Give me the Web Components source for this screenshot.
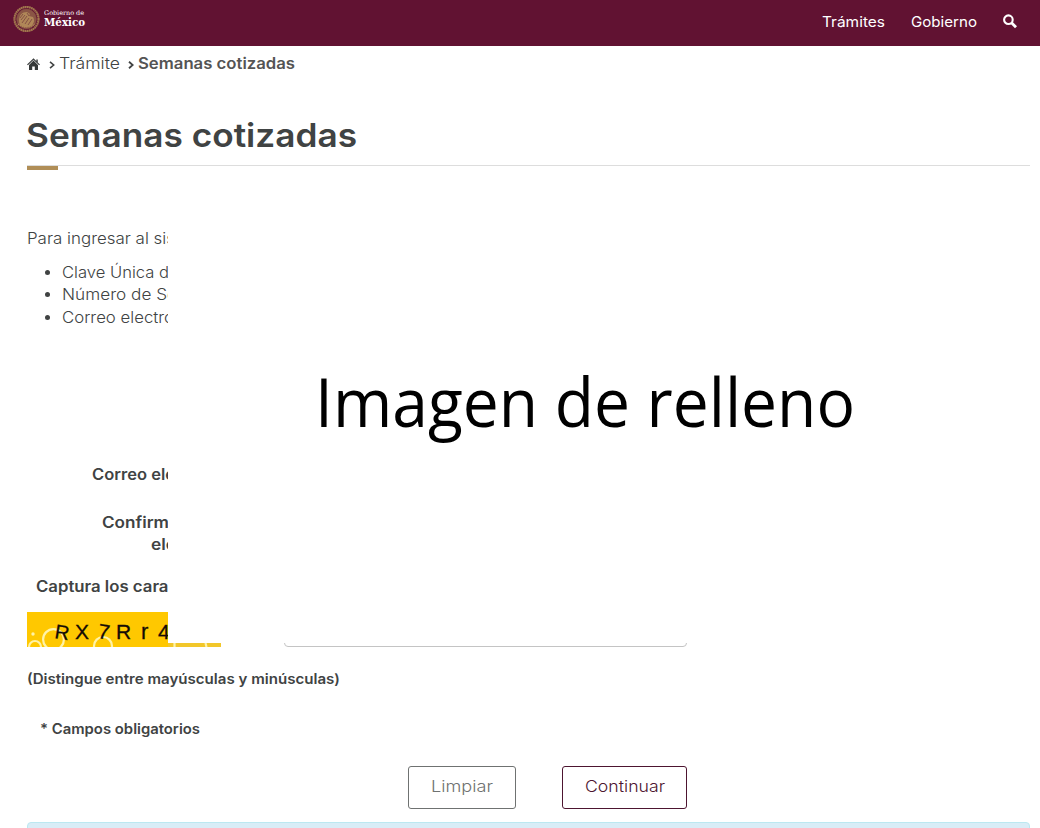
<!DOCTYPE html>
<html lang="es">
<head>
<meta charset="utf-8">
<title>Semanas cotizadas</title>
<style>
html,body{margin:0;padding:0;background:#fff}
body{font-family:Inter,"Open Sans",sans-serif;color:#404343;width:1040px;height:828px;overflow:hidden}
</style>
</head>
<body>
<semanas-page></semanas-page>
<script>
/* A line of text whose glyphs are stretched to fill a set width. */
class FitText extends HTMLElement{
  connectedCallback(){
    const w=+this.getAttribute('w'), s=this.getAttribute('size')||15.5, lh=this.getAttribute('lh')||22;
    const r=this.attachShadow({mode:'open'});
    r.innerHTML=`<style>:host{display:block;flex:none;width:${w}px;height:${lh}px;font-size:${s}px;line-height:${lh}px;font-weight:${this.getAttribute('weight')||400}}
    span{display:inline-block;white-space:pre;transform-origin:0 50%;vertical-align:top}</style><span><slot></slot></span>`;
    const sp=r.querySelector('span');
    const n=sp.getBoundingClientRect().width;
    if(n) sp.style.transform=`scaleX(${w/n})`;
  }
}
class GobHeader extends HTMLElement{
  constructor(){super();this.attachShadow({mode:'open'}).innerHTML=`
<style>
:host{display:flex;height:46px;box-sizing:border-box;background:#611232;color:#fff;padding:0 22px 0 13px;align-items:flex-start}
.seal{margin-top:5px;width:27px;height:28px}
.brand{margin:9px 0 0 4px;font-family:"DejaVu Serif",serif}
nav{display:flex;margin:11px 0 0 auto}
.g{margin-left:26px}
.s{margin:3px 0 0 25px;width:15px;height:15px}
</style>
<svg class="seal" viewBox="0 0 27 28" fill="none">
<circle cx="13.5" cy="14" r="12" stroke="#a37a50" stroke-width="2.200" stroke-dasharray="1.6 .5"/>
<circle cx="13.5" cy="14" r="12.4" stroke="#a07449" stroke-width=".6"/>
<circle cx="13.5" cy="14" r="9.9" fill="#8a5545" stroke="#8a5545" stroke-width=".6"/>
<path d="M6 16c0-6 3-9 8-9l3 2-1 2 4 1c2 3 1 7-2 9l-4 1c-5 0-8-2-8-6z" fill="#b08758"/>
<path d="M8 15l4-5M9 18l5-7M12 19l4-6M15 20l4-6M14 8l2 3M7 13l3-4" stroke="#7a4240" stroke-width=".8"/>
<path d="M5 19q8 6 17 0" stroke="#b28959" stroke-width="1.4" stroke-dasharray="1.5 .7"/>
</svg>
<div class="brand"><fit-text w="40" size="6.4" lh="9">Gobierno de</fit-text><fit-text w="41" size="11" lh="9" weight="700" style="margin-top:1px;line-height:8px">México</fit-text></div>
<nav><fit-text w="63" size="14.5">Trámites</fit-text><fit-text class="g" w="66" size="14.5">Gobierno</fit-text>
<svg class="s" style="margin-left:26px" viewBox="0 0 15 15" fill="none" stroke="#fff"><circle cx="5.4" cy="5.7" r="4.3" stroke-width="2.1"/><path d="M8.500 8.800l4.500 4.400" stroke-width="2.800"/></svg></nav>`}
}
class BreadCrumb extends HTMLElement{
  constructor(){super();this.attachShadow({mode:'open'}).innerHTML=`
<style>
:host{display:flex;height:22px;padding:7px 0 0 27px}
svg{flex:none}.h{width:13px;height:13px;margin:5px 9px 0 0}.c{width:6px;height:8px;margin:8px 4px 0 0}.d{margin-left:8px}
</style>
<svg class="h" viewBox="0 0 13 13"><path d="M6.5.3L0 6.6l.9.7L6.5 2l5.600 5.300.9-.7-2.200-2.100V1.400H9.300v1.700z" fill="#404343"/><path d="M6.5 2.500L2 7V12h3.200V8.500h2.600V12H11V7z" fill="#353838"/></svg>
<svg class="c" viewBox="0 0 6 8" fill="none" stroke="#404343" stroke-width="1.6"><path d="M1 .8L4.7 4 1 7.2"/></svg>
<fit-text w="61" weight="300">Trámite</fit-text>
<svg class="c d" viewBox="0 0 6 8" fill="none" stroke="#404343" stroke-width="1.8"><path d="M1 .8L4.7 4 1 7.2"/></svg>
<fit-text w="157" weight="600" style="color:#545454">Semanas cotizadas</fit-text>`}
}
class PageTitle extends HTMLElement{
  constructor(){super();this.attachShadow({mode:'open'}).innerHTML=`
<style>:host{display:block;margin:40px 10px 0 27px}
.t{margin-left:-1px}
.rule{margin-top:10px;border-top:1px solid #ddd}.gold{width:31px;height:4px;background:#b08e57}</style>
<fit-text class="t" w="331" size="33" lh="40" weight="600"><slot></slot></fit-text><div class="rule"><div class="gold"></div></div>`}
}
class IntroList extends HTMLElement{
  constructor(){super();this.attachShadow({mode:'open'}).innerHTML=`
<style>:host{display:block;margin:58px 0 0 27px}
ul{list-style:none;margin:12px 0 0;padding:0}li{display:flex;align-items:center;height:22px;padding-left:18px}
li:last-child{margin-top:1px}
i{width:5px;height:5px;border-radius:50%;background:#404343;margin:-1px 12px 0 0}</style>
<fit-text w="148" weight="300">Para ingresar al sis</fit-text>
<ul><li><i></i><fit-text w="107" weight="300">Clave Única d</fit-text></li>
<li><i></i><fit-text w="115" weight="300">Número de Se</fit-text></li>
<li><i></i><fit-text w="112" weight="300">Correo electro</fit-text></li></ul>`}
}
class CaptchaRow extends HTMLElement{
  constructor(){super();this.attachShadow({mode:'open'}).innerHTML=`
<style>:host{display:flex;margin:14px 0 0 27px;height:35px}
svg{width:194px;height:35px}
.in{box-sizing:border-box;width:403px;height:35px;margin-left:63px;border:1px solid #c4c4c4;border-radius:4px}</style>
<svg viewBox="0 0 194 35"><rect width="194" height="35" fill="#ffc800"/><rect x="141" y="31" width="53" height="4" fill="#f2c72a"/>
<g fill="none" stroke="#fff3a8" stroke-width="2.200"><circle cx="26.500" cy="27.500" r="10.400"/><circle cx="8" cy="35" r="6"/><circle cx="76" cy="34" r="9"/><path d="M147.500 31v4M178.500 31l1 4"/></g><circle cx="6" cy="22" r="1.700" fill="#fff3a8"/>
<g font-family="Liberation Sans,sans-serif" font-size="21" fill="#140b05" stroke="#140b05" stroke-width=".3"><text transform="translate(27 26) rotate(9)" font-size="20">R</text><text x="48" y="27" textLength="14" lengthAdjust="spacingAndGlyphs">X</text><text transform="translate(70 26) rotate(9)">7</text><text x="89" y="27">R</text><text x="114" y="27" font-size="22">r</text><text x="131" y="27">4</text></g></svg>
<div class="in"></div>`}
}
class FormLabels extends HTMLElement{
  constructor(){super();this.attachShadow({mode:'open'}).innerHTML=`
<style>:host{display:block;margin-top:135px}</style>
<fit-text w="83" weight="560" style="margin-left:92px">Correo ele</fit-text>
<fit-text w="67" weight="560" style="margin:26px 0 0 102px">Confirm</fit-text>
<fit-text w="25" weight="560" style="margin-left:151px">ele</fit-text>
<fit-text w="132.500" weight="560" style="margin:20px 0 0 35.500px">Captura los cara</fit-text>`}
}
class GobButton extends HTMLElement{
  constructor(){super();this.attachShadow({mode:'open'}).innerHTML=`
<style>:host{display:block}button{all:unset;box-sizing:border-box;display:flex;justify-content:center;width:100%;height:43px;padding-top:9px;border:1px solid currentColor;border-radius:3px}</style><button><slot></slot></button>`}
}
class FillerImage extends HTMLElement{
  constructor(){super();this.attachShadow({mode:'open'}).innerHTML=`
<style>:host{position:absolute;left:168px;top:190px;width:872px;height:453px;box-sizing:border-box;background:#fff;color:#000;font-family:"Open Sans",sans-serif;padding:161px 0 0 147px}</style>
<fit-text w="540" size="68.500" lh="100" weight="440">Imagen de relleno</fit-text>`}
}
class SemanasPage extends HTMLElement{
  constructor(){super();this.attachShadow({mode:'open'}).innerHTML=`
<style>:host{display:block;position:relative;height:828px;overflow:hidden}
.b{display:flex;gap:46px;margin:26px 0 0 408px}
.alert{margin:13px 10px 0 27px;height:30px;background:#d9edf7;border:1px solid #bce8f1;border-radius:4px}</style>
<gob-header></gob-header><bread-crumb></bread-crumb><page-title>Semanas cotizadas</page-title>
<intro-list></intro-list><form-labels></form-labels><captcha-row></captcha-row>
<fit-text w="313" size="14" weight="560" style="margin:21px 0 0 26.500px">(Distingue entre mayúsculas y minúsculas)</fit-text>
<fit-text w="160" size="14" weight="560" style="margin:28px 0 0 40px">* Campos obligatorios</fit-text>
<div class="b"><gob-button style="width:108px;color:#6f7271"><fit-text w="62" weight="300">Limpiar</fit-text></gob-button>
<gob-button style="width:125px;color:#4d1530"><fit-text w="80" weight="300">Continuar</fit-text></gob-button></div>
<div class="alert"></div><filler-image></filler-image>`}
}
customElements.define('semanas-page',SemanasPage);
customElements.define('gob-header',GobHeader);
customElements.define('bread-crumb',BreadCrumb);
customElements.define('page-title',PageTitle);
customElements.define('intro-list',IntroList);
customElements.define('form-labels',FormLabels);
customElements.define('captcha-row',CaptchaRow);
customElements.define('gob-button',GobButton);
customElements.define('filler-image',FillerImage);
customElements.define('fit-text',FitText);
</script>
</body>
</html>
